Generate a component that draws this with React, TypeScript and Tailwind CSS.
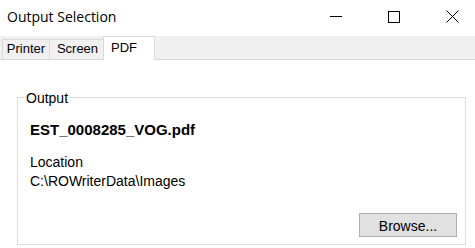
import React from "react";

export default function App() {
  return (
    <div className="w-[475px] h-[248px] bg-white overflow-hidden flex flex-col text-black" style={{ fontFamily: '"Liberation Sans", Arial, sans-serif' }}>
      {/* Title bar */}
      <div className="h-[36px] flex items-start shrink-0">
        <div className="pl-[7px] pt-[7px] text-[14px] leading-[19px] text-black" style={{ fontFamily: '"Open Sans", "Noto Sans", sans-serif' }}>
          Output Selection
        </div>
        <div className="ml-auto flex items-start gap-[46px] pr-[16px] pt-[11px]">
          <svg width="12" height="12" viewBox="0 0 12 12" className="block">
            <line x1="0" y1="5.5" x2="12" y2="5.5" stroke="#000" strokeWidth="1" />
          </svg>
          <svg width="12" height="12" viewBox="0 0 12 12" className="block">
            <rect x="0.5" y="0.5" width="11" height="11" fill="none" stroke="#000" strokeWidth="1" />
          </svg>
          <svg width="13" height="13" viewBox="0 0 13 13" className="block mt-[-1px]">
            <line x1="0.5" y1="0.5" x2="12.5" y2="12.5" stroke="#000" strokeWidth="1" />
            <line x1="12.5" y1="0.5" x2="0.5" y2="12.5" stroke="#000" strokeWidth="1" />
          </svg>
        </div>
      </div>

      {/* Tab strip */}
      <div className="h-[24px] shrink-0 bg-[#f0f0f0] border-b border-[#d9d9d9] flex items-end pl-[2px] text-[13px] leading-[15px]">
        <div className="w-[48px] h-[20px] border-l border-t border-r border-[#d9d9d9] flex justify-center items-start pt-[1px]">
          Printer
        </div>
        <div className="w-[53px] h-[20px] border-t border-[#d9d9d9] flex justify-center items-start pt-[1px] pl-[2px]">
          Screen
        </div>
        <div className="w-[52px] h-[24px] mb-[-1px] bg-white border-l border-t border-r border-[#d9d9d9] flex items-start pt-[3px] pl-[7px]">
          PDF
        </div>
      </div>

      {/* Page content */}
      <div className="flex-1 pt-[37px] pl-[17px]">
        <div className="relative w-[449px] h-[148px] border border-[#dcdcdc] flex flex-col pt-[23px] pl-[12px] text-[14px]">
          <div className="absolute top-[-8px] left-[7px] px-[1px] bg-white leading-[16px]">Output</div>
          <div className="font-bold text-[15px] leading-[17px]">EST_0008285_VOG.pdf</div>
          <div className="mt-[15px] leading-[19px]">Location</div>
          <div className="leading-[19px]">C:\ROWriterData\Images</div>
          <div className="mt-auto mb-[7px] mr-[8px] self-end">
            <div className="w-[98px] h-[24px] bg-[#e1e1e1] border border-[#adadad] flex items-center justify-center pt-[2px] leading-[16px]">
              Browse...
            </div>
          </div>
        </div>
      </div>
    </div>
  );
}
